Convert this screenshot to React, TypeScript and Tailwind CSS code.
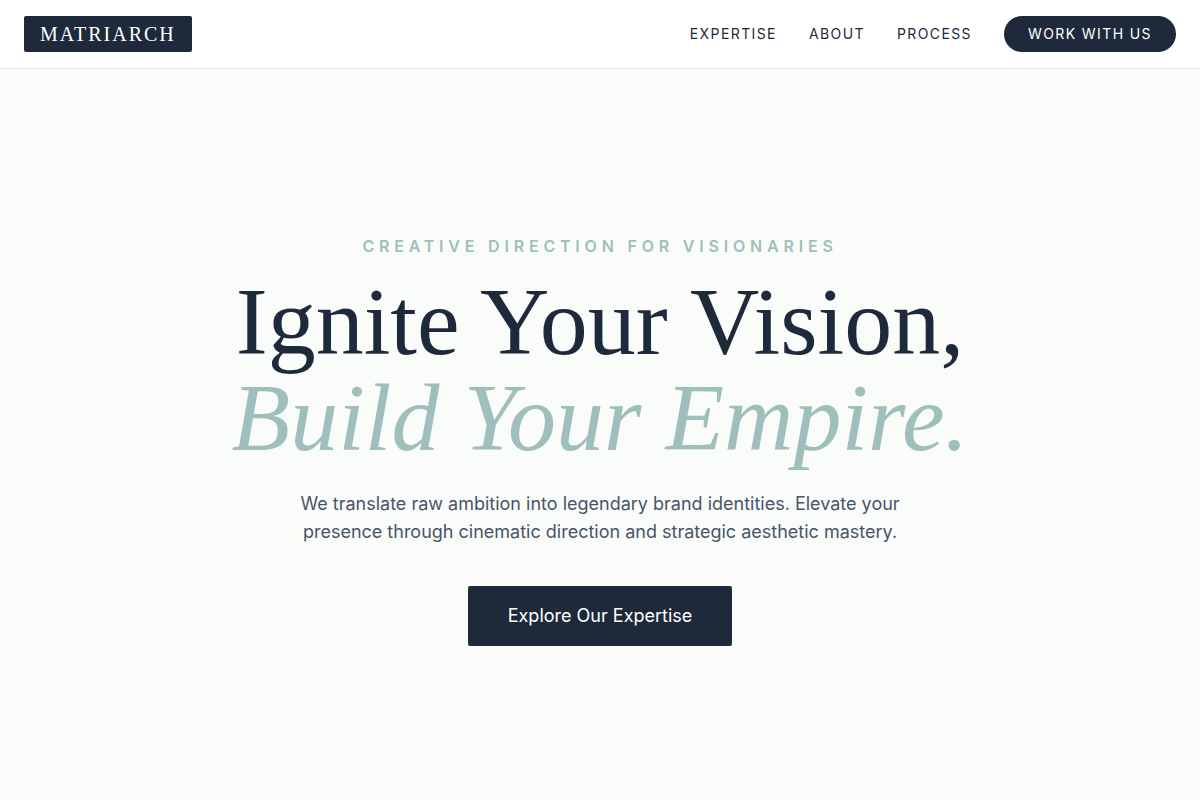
const navLinks = [
  { label: "Expertise", href: "#expertise" },
  { label: "About", href: "#about" },
  { label: "Process", href: "#process" },
];

function Header() {
  return (
    <header className="border-b border-[#e5e7eb] bg-white">
      <div className="flex items-center justify-between px-6 py-4">
        <a
          href="#top"
          className="rounded-xs bg-[#1e293b] px-4 py-1 font-['Liberation_Serif',serif] text-xl leading-7 tracking-widest text-white uppercase"
        >
          Matriarch
        </a>
        <nav className="flex items-center gap-8 text-sm tracking-widest uppercase">
          {navLinks.map((link) => (
            <a key={link.href} href={link.href}>
              {link.label}
            </a>
          ))}
          <a href="#contact" className="rounded-full bg-[#1e293b] px-6 py-2 text-white">
            Work With Us
          </a>
        </nav>
      </div>
    </header>
  );
}

function Hero() {
  return (
    <main className="flex flex-1 flex-col items-center justify-center px-6 pt-[10px] text-center">
      <p className="mb-4 font-semibold tracking-[0.3em] text-[#9fbfbc] uppercase">
        Creative Direction for Visionaries
      </p>
      <h1 className="mb-6 font-['Liberation_Serif',serif] text-8xl leading-none">
        Ignite Your Vision,
        <br />
        <span className="text-[#9fbfbc] italic">Build Your Empire.</span>
      </h1>
      <p className="mb-10 max-w-2xl text-lg text-[#475569]">
        We translate raw ambition into legendary brand identities. Elevate your presence through
        cinematic direction and strategic aesthetic mastery.
      </p>
      <a
        href="#expertise"
        className="rounded-xs bg-[#1e293b] px-10 py-4 text-lg text-white"
      >
        Explore Our Expertise
      </a>
    </main>
  );
}

export default function App() {
  return (
    <div
      id="top"
      className="flex min-h-screen flex-col bg-[#fafcf9] font-['Inter',sans-serif] text-[#1e293b]"
    >
      <Header />
      <Hero />
    </div>
  );
}
